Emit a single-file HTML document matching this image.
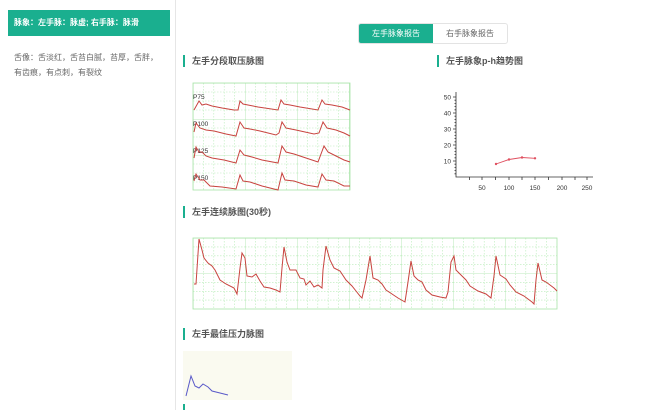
<!DOCTYPE html>
<html><head><meta charset="utf-8"><style>
*{margin:0;padding:0;box-sizing:border-box}
body{width:650px;height:410px;overflow:hidden;background:#fff;font-family:"Liberation Sans","Noto Sans CJK SC",sans-serif;position:relative}
.side{position:absolute;left:0;top:0;width:176px;height:410px;border-right:1px solid #e6e6e6}
.pulse{position:absolute;left:8px;top:10px;width:162px;height:26px;background:#1aaf8f;color:#fff;font-size:8px;font-weight:bold;line-height:26px;padding-left:6px}
.tongue{position:absolute;left:14px;top:50px;width:150px;font-size:8px;color:#666;line-height:15px}
.tabs{position:absolute;left:358px;top:23px;height:21px;display:flex;border:1px solid #e3e3e3;border-radius:3px;overflow:hidden;font-size:8px}
.tabs div{width:74px;text-align:center;line-height:19px;color:#666}
.tabs .on{background:#1aaf8f;color:#fff}
.h{position:absolute;font-size:9px;font-weight:bold;color:#555;padding-left:9px;height:12px;line-height:12px}
.h:before{content:"";position:absolute;left:0;top:0;width:2px;height:12px;background:#1aaf8f}
svg{position:absolute;left:0;top:0}
</style></head><body>
<div class="side">
<div class="pulse">脉象：左手脉：脉虚; 右手脉：脉滑</div>
<div class="tongue">舌像：舌淡红，舌苔白腻，苔厚，舌胖，有齿痕，有点刺，有裂纹</div>
</div>
<div class="tabs"><div class="on">左手脉象报告</div><div>右手脉象报告</div></div>
<div class="h" style="left:183px;top:55px">左手分段取压脉图</div>
<div class="h" style="left:437px;top:55px">左手脉象p-h趋势图</div>
<div class="h" style="left:183px;top:206px">左手连续脉图(30秒)</div>
<div class="h" style="left:183px;top:328px">左手最佳压力脉图</div>
<div style="position:absolute;left:183px;top:404px;width:2px;height:6px;background:#1aaf8f"></div>
<svg width="650" height="410">
<defs>
<pattern id="g1" x="193" y="83" width="52" height="36" patternUnits="userSpaceOnUse">
<path d="M10.4 0V36M20.8 0V36M31.2 0V36M41.6 0V36M0 9H52M0 18H52M0 27H52" stroke="#b8ecb8" stroke-width="0.6" stroke-dasharray="1.5 1.5"/>
<path d="M0 0V36M0 0H52" stroke="#a8e4a8" stroke-width="0.8"/>
</pattern>
<pattern id="g2" x="193" y="238" width="52" height="35.5" patternUnits="userSpaceOnUse">
<path d="M10.4 0V36M20.8 0V36M31.2 0V36M41.6 0V36M0 8.9H52M0 17.8H52M0 26.6H52" stroke="#b8ecb8" stroke-width="0.6" stroke-dasharray="1.5 1.5"/>
<path d="M0 0V36M0 0H52" stroke="#a8e4a8" stroke-width="0.8"/>
</pattern>
</defs>
<rect x="193" y="83" width="157" height="107" fill="url(#g1)" stroke="#a8e4a8" stroke-width="0.8"/>
<rect x="193" y="238" width="364" height="71" fill="url(#g2)" stroke="#a8e4a8" stroke-width="0.8"/>
<g font-size="6.5" fill="#333" font-family="Liberation Sans,sans-serif">
<text x="193" y="99">P75</text><text x="193" y="126">P100</text><text x="193" y="153">P125</text><text x="193" y="180">P150</text>
</g>
<g fill="none" stroke="#c8443f" stroke-width="1">
<path d="M194 110L199 101L202 105L206 104L212 106L222 108L234 110L238 110L240 101L243 104L248 105L258 107L278 110L281 100L284 104L290 105L300 107L318 110L322 100L325 104L332 105L342 107L350 110"/>
<path d="M194 132L196 123L200 128L206 130L214 131L226 134L236 136L240 122L244 128L250 129L260 131L276 135L279 133L282 122L286 128L296 130L314 134L319 133L323 122L327 128L336 130L344 133L350 136"/>
<path d="M194 158L196 147L199 152L202 152L206 156L212 158L224 160L236 163L240 150L244 155L252 157L262 160L278 163L282 146L286 152L294 154L306 158L318 162L324 146L328 152L336 156L344 160L350 162"/>
<path d="M194 181L196 174L200 180L204 180L210 186L222 187L236 189L240 175L243 181L250 182L262 186L278 190L282 173L285 180L294 181L306 185L318 187L322 174L326 180L334 181L344 186L350 186"/>
<path d="M194 284L196 284L199 239L202 250L204 258L208 263L212 266L215 270L220 280L226 284L234 288L237 294L240 268L242 253L245 258L247 276L252 277L256 274L260 281L264 287L270 288L276 290L280 292L282 268L284 247L287 262L290 270L296 270L300 278L304 279L306 285L310 281L314 287L318 285L322 288L323 270L326 246L330 260L334 268L340 271L346 280L352 286L356 291L360 296L362 298L366 280L370 256L373 278L378 280L382 284L386 290L392 294L398 298L405 302L408 282L411 261L414 276L418 280L422 282L426 290L432 295L440 297L446 298L448 292L451 262L454 256L456 270L462 276L466 280L470 286L478 291L486 294L491 298L494 276L496 256L500 275L506 279L510 285L516 292L524 296L532 302L534 304L536 280L538 263L542 280L546 282L550 285L554 288L557 291"/>
</g>
<path d="M186 396L191 376L195 386L199 388L203 384L208 387L212 391L220 393L228 395" fill="none" stroke="#5b5bd6" stroke-width="1"/>
<rect x="183" y="351" width="109" height="49" fill="#fafaf0" style="mix-blend-mode:multiply"/>
<g stroke="#333" stroke-width="0.8" fill="none">
<path d="M456 92V177H593"/>
<path d="M453 97H456M453 113H456M453 129H456M453 145H456M453 161H456M469.5 177V180M482 177V180M495.5 177V180M509 177V180M522 177V180M535 177V180M548.5 177V180M562 177V180M575 177V180M587 177V180"/>
<path d="M454.5 100.2H456M454.5 103.4H456M454.5 106.6H456M454.5 109.8H456M454.5 116.2H456M454.5 119.4H456M454.5 122.6H456M454.5 125.8H456M454.5 132.2H456M454.5 135.4H456M454.5 138.6H456M454.5 141.8H456M454.5 148.2H456M454.5 151.4H456M454.5 154.6H456M454.5 157.8H456M454.5 164.2H456M454.5 167.4H456M454.5 170.6H456M454.5 173.8H456"/>
</g>
<g font-size="6.5" fill="#333" font-family="Liberation Sans,sans-serif" text-anchor="end">
<text x="451" y="99.5">50</text><text x="451" y="115.5">40</text><text x="451" y="131.5">30</text><text x="451" y="147.5">20</text><text x="451" y="163.5">10</text>
</g>
<g font-size="6.5" fill="#333" font-family="Liberation Sans,sans-serif" text-anchor="middle">
<text x="482" y="190">50</text><text x="509" y="190">100</text><text x="535" y="190">150</text><text x="562" y="190">200</text><text x="587" y="190">250</text>
</g>
<path d="M496 164L509 159.5L522 157.5L535 158.3" fill="none" stroke="#e05060" stroke-width="0.9"/>
<g fill="#e05060"><circle cx="496" cy="164" r="1.2"/><circle cx="509" cy="159.5" r="1.2"/><circle cx="522" cy="157.5" r="1.2"/><circle cx="535" cy="158.3" r="1.2"/></g>
</svg>
</body></html>
